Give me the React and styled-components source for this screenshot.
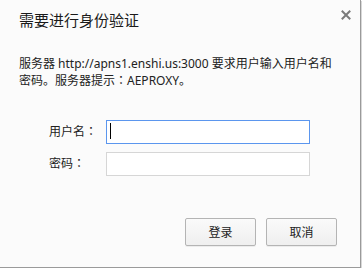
import React from 'react';
import styled, { createGlobalStyle } from 'styled-components';

const GlobalStyle = createGlobalStyle`
  html, body {
    margin: 0;
    padding: 0;
    background: #ffffff;
  }
  body {
    font-family: "Noto Sans", "Noto Sans CJK SC", sans-serif;
    color: #222;
  }
`;

const Dialog = styled.div`
  box-sizing: border-box;
  width: 361px;
  height: 268px;
  background: #fbfbfb;
  border-right: 1px solid #9a9a9a;
  border-bottom: 1px solid #9a9a9a;
  box-shadow: 1px 1px 0 #d8d8d8;
  display: flex;
  flex-direction: column;
`;

const Header = styled.div`
  display: flex;
  justify-content: space-between;
  align-items: flex-start;
  padding: 10px 9px 0 19px;
`;

const Title = styled.h1`
  margin: 0;
  font-size: 15px;
  font-weight: normal;
  line-height: 20px;
  color: #1a1a1a;
`;

const CloseButton = styled.button`
  border: none;
  background: none;
  padding: 0;
  width: 10px;
  height: 10px;
  display: flex;
  cursor: pointer;
  svg {
    display: block;
  }
`;

const Message = styled.p`
  margin: 26px 0 0 19px;
  font-size: 12px;
  line-height: 16px;
  color: #222;
  white-space: nowrap;
`;

// centred full-width colon, as the Windows UI font draws it
const Colon = styled.span`
  font-family: "Noto Sans CJK TC", sans-serif;
`;

const Form = styled.div`
  margin: 30px 0 0 49px;
  display: grid;
  grid-template-columns: 57px 204px;
  grid-auto-rows: 24px;
  row-gap: 8px;
  align-items: center;
`;

const Label = styled.label`
  font-size: 12px;
  line-height: 16px;
  color: #222;
`;

const FieldWrap = styled.div`
  position: relative;
  height: 24px;
`;

const Input = styled.input`
  box-sizing: border-box;
  width: 100%;
  height: 100%;
  margin: 0;
  padding: 0 4px;
  background: #fff;
  border: 1px solid ${(p) => (p.$focused ? '#5b96ee' : '#d6d6d6')};
  outline: none;
  font-size: 12px;
  font-family: inherit;
  caret-color: transparent;
`;

const Caret = styled.span`
  position: absolute;
  left: 4px;
  top: 4px;
  width: 1px;
  height: 16px;
  background: #000;
`;

const Actions = styled.div`
  margin-top: 43px;
  padding-right: 23px;
  display: flex;
  justify-content: flex-end;
  gap: 10px;
`;

const Button = styled.button`
  box-sizing: border-box;
  width: 71px;
  height: 28px;
  border: 1px solid #b4b4b4;
  border-radius: 2px;
  background: linear-gradient(#fafafa, #efefef);
  box-shadow: 0 1px 0 rgba(0, 0, 0, 0.06);
  font-family: inherit;
  font-size: 12px;
  color: #222;
  padding: 0;
  cursor: pointer;
`;

const CloseIcon = () => (
  <svg width="10" height="10" viewBox="0 0 10 10">
    <path d="M1.5 1.5 L8.5 8.5 M8.5 1.5 L1.5 8.5" stroke="#7a7a7a" strokeWidth="2" strokeLinecap="square" />
  </svg>
);

export default function App() {
  return (
    <>
      <GlobalStyle />
      <Dialog>
        <Header>
          <Title>需要进行身份验证</Title>
          <CloseButton aria-label="关闭">
            <CloseIcon />
          </CloseButton>
        </Header>
        <Message>
          服务器 http://apns1.enshi.us:3000 要求用户输入用户名和
          <br />
          密码。服务器提示<Colon>：</Colon>AEPROXY。
        </Message>
        <Form>
          <Label htmlFor="user">用户名<Colon>：</Colon></Label>
          <FieldWrap>
            <Input id="user" type="text" $focused />
            <Caret />
          </FieldWrap>
          <Label htmlFor="pass">密码<Colon>：</Colon></Label>
          <FieldWrap>
            <Input id="pass" type="password" />
          </FieldWrap>
        </Form>
        <Actions>
          <Button>登录</Button>
          <Button>取消</Button>
        </Actions>
      </Dialog>
    </>
  );
}
